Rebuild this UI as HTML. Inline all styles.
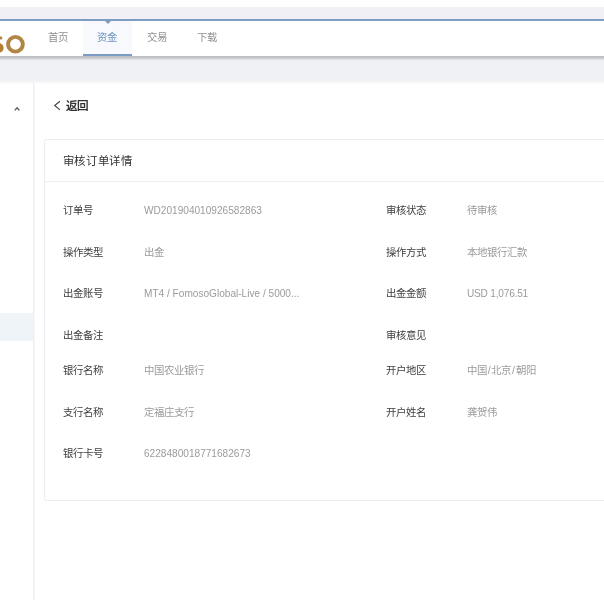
<!DOCTYPE html>
<html lang="zh-CN">
<head>
<meta charset="utf-8">
<title>审核订单详情</title>
<style>
html,body{margin:0;padding:0;}
body{width:604px;height:600px;overflow:hidden;background:#fff;position:relative;font-family:"Liberation Sans",sans-serif;color:#333;}
.abs{position:absolute;}
#header,#card,#back{will-change:transform;}
#topgrey{left:0;top:7px;width:604px;height:12px;background:#f1f1f5;}
#blueline{left:0;top:19px;width:604px;height:2px;background:#7f9cc2;}
#header{left:-20px;top:21px;width:660px;height:35px;background:#fff;box-shadow:0 3px 2px rgba(0,0,0,.2);z-index:3;}
#band{left:0;top:56px;width:604px;height:25px;background:#f0f1f5;z-index:1;border-bottom:2px solid #f6f6f8;}
.tab{position:absolute;top:0;height:35px;width:49.75px;text-align:center;font-size:10.4px;line-height:35.6px;color:#909090;}
.tab span{display:inline-block;transform:translateY(-0.55px);}
.tab.on{background:#f7f9fd;color:#6e90be;}
.tab.on:after{content:"";position:absolute;left:0;right:0;bottom:0;height:2px;background:#7c9bc5;}
.tab.on:before{content:"";position:absolute;left:21.6px;top:0;border-left:3px solid transparent;border-right:3px solid transparent;border-top:3px solid #7c9bc5;}
#sideline{left:33px;top:82px;width:1px;height:518px;background:#efeff2;border-right:1px solid #f8f8fa;}
#sidesel{left:0;top:313px;width:33px;height:28px;background:#eff4f8;}
#back{left:66.4px;top:96.1px;font-size:11.5px;line-height:20px;font-weight:bold;color:#333;white-space:nowrap;}
#card{left:44px;top:139px;width:620px;height:360px;border:1px solid #ededf0;border-radius:2px;background:#fff;}
#cardhead{left:0;top:0;width:620px;height:41px;border-bottom:1px solid #f0f0f3;}
#title{left:17.6px;top:10.7px;font-size:11.4px;letter-spacing:.65px;line-height:20px;color:#333;white-space:nowrap;}
.lab,.val{position:absolute;font-size:10.4px;line-height:16px;white-space:nowrap;}
.lab{color:#3e3e3e;}
.val{color:#9b9b9b;}
.en{font-size:10.1px;}
.sl{margin:0 .7px;}
</style>
</head>
<body>
<div id="topgrey" class="abs"></div>
<div id="blueline" class="abs"></div>
<div id="band" class="abs"></div>
<div id="header" class="abs">
  <svg class="abs" style="left:20px;top:9px" width="30" height="26" viewBox="0 30 30 26">
    <circle cx="15.45" cy="44.25" r="7.4" fill="none" stroke="#b08644" stroke-width="3.9"/>
    <path d="M0 43.2 C2.4 43.7 3.6 45.8 3.6 48 C3.6 50.4 2.2 52.2 0 52.6 Z" fill="#b5802f"/>
    <path d="M0 36.3 L1.7 36.7 L2.6 38 L1.3 39.8 L0 39.3 Z" fill="#b08644"/>
  </svg>
  <div class="tab" style="left:53px"><span>首页</span></div>
  <div class="tab on" style="left:103px;width:49px;text-indent:-1px"><span>资金</span></div>
  <div class="tab" style="left:152.5px"><span>交易</span></div>
  <div class="tab" style="left:202.25px"><span>下载</span></div>
</div>
<div id="sideline" class="abs"></div>
<div id="sidesel" class="abs"></div>
<svg class="abs" style="left:13px;top:105px" width="9" height="8" viewBox="0 0 9 8"><path d="M1.8 5.4 L4.1 2.9 L6.4 5.4" fill="none" stroke="#5c5c5c" stroke-width="1.4"/></svg>
<svg class="abs" style="left:52px;top:99px" width="10" height="13" viewBox="0 0 10 13"><path d="M7.9 2.2 L2.7 6.55 L7.9 10.9" fill="none" stroke="#444" stroke-width="1.15"/></svg>
<div id="back" class="abs">返回</div>
<div id="card" class="abs">
  <div id="cardhead" class="abs"><div id="title" class="abs">审核订单详情</div></div>
  <div class="lab" style="left:17.7px;top:63.2px">订单号</div><div class="val en" style="left:99px;top:63.2px">WD201904010926582863</div>
  <div class="lab" style="left:341px;top:63.2px">审核状态</div><div class="val" style="left:422px;top:63.2px">待审核</div>
  <div class="lab" style="left:17.7px;top:104.7px">操作类型</div><div class="val" style="left:99px;top:104.7px">出金</div>
  <div class="lab" style="left:341px;top:104.7px">操作方式</div><div class="val" style="left:422px;top:104.7px">本地银行汇款</div>
  <div class="lab" style="left:17.7px;top:146.2px">出金账号</div><div class="val en" style="left:99px;top:146.2px">MT4 / FomosoGlobal-Live / 5000...</div>
  <div class="lab" style="left:341px;top:146.2px">出金金额</div><div class="val en" style="left:422px;top:146.2px;letter-spacing:-0.2px">USD 1,076.51</div>
  <div class="lab" style="left:17.7px;top:187.7px">出金备注</div>
  <div class="lab" style="left:341px;top:187.7px">审核意见</div>
  <div class="lab" style="left:17.7px;top:223.2px">银行名称</div><div class="val" style="left:99px;top:223.2px">中国农业银行</div>
  <div class="lab" style="left:341px;top:223.2px">开户地区</div><div class="val" style="left:422px;top:223.2px">中国<span class="sl">/</span>北京<span class="sl">/</span>朝阳</div>
  <div class="lab" style="left:17.7px;top:264.7px">支行名称</div><div class="val" style="left:99px;top:264.7px">定福庄支行</div>
  <div class="lab" style="left:341px;top:264.7px">开户姓名</div><div class="val" style="left:422px;top:264.7px">龚贺伟</div>
  <div class="lab" style="left:17.7px;top:306.2px">银行卡号</div><div class="val en" style="left:99px;top:306.2px">6228480018771682673</div>
</div>
</body>
</html>
